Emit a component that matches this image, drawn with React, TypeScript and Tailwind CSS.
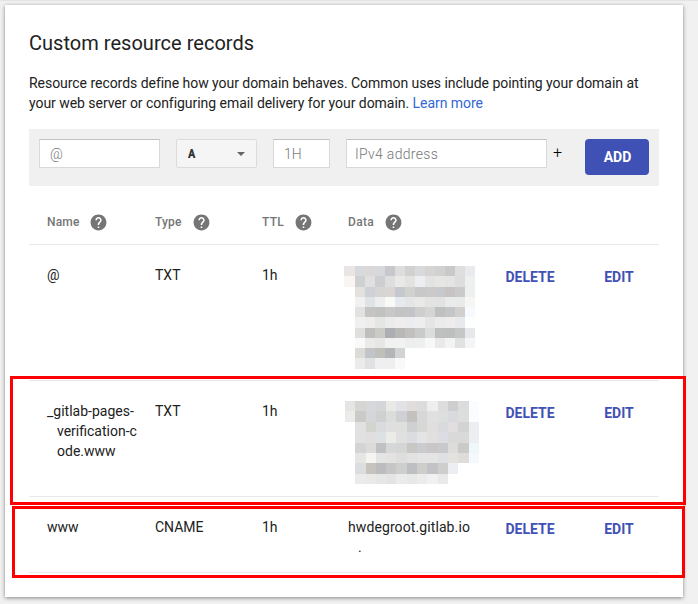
import React from "react";

const firstMosaic: string[][] = [
  ["e9e5e4", "d7d9dc", "dbd9d7", "d6d8db", "c6c8cb", "dddddd", "d1d1cf", "d7d9dc", "d5d4d2", "d2d1cf", "c7c9cb", "dedede", "e8eaed"],
  ["fbf5f1", "cfd0d2", "e0e0e0", "cdcecf", "dedede", "eae9e7", "e2e2df", "eceef2", "e3e3e1", "e6e6e4", "e4e4e4", "dddddd", "edf0ef"],
  ["ffffff", "e2e1db", "ced2d8", "d7d5d3", "d9d5d2", "c5c9ce", "d1d1cf", "c8c8c8", "cbcaca", "c8c9cc", "c6c3c2", "cacaca", "edf0ef"],
  ["ffffff", "f1f1f1", "e0e3e6", "ecefee", "f9f9f8", "e6e9ed", "e5e5e6", "ebe9e7", "e3e3e4", "e2e2e3", "e8ebea", "e7eae8", "f6f6f3"],
  ["ffffff", "e2e2e1", "c5c4c3", "c1c2c2", "c9c8c8", "c3c3c3", "c2c4c7", "cececd", "d6d5d6", "bfc1c1", "c3c5c7", "d1d0cf", "f6faff"],
  ["ffffff", "f0f0f0", "eeedec", "e4e6e4", "ebebec", "efeded", "ebecf0", "efeeee", "e5e5e6", "ebebeb", "efedec", "e8e9ec", "fdfefe"],
  ["ffffff", "dfdfde", "bdbebe", "cacbc4", "adaeb2", "b8b8b7", "c2c0be", "c8cbca", "dadddb", "bebfbf", "bebebe", "c5c7c6", "e6e8eb"],
  ["ffffff", "f9f9f9", "ebebea", "e6e7e4", "f1f1f2", "f2f2f2", "ecefee", "eef0ef", "f7f7f7", "e9e9e9", "f4f3f3", "dfe2e1", "f4f5f7"],
  ["ffffff", "dcdbd7", "c1c5ca", "bfc0ba", "b4b5b9", "d2d4d3"],
  ["ffffff", "ebebeb", "dfe1e2", "efefef", "efefef", "f7faf9"],
];

const secondMosaic: string[][] = [
  ["e5e5e3", "d6d5d3", "d5d9dc", "d3d5d8", "e9e9e6", "e0e2e6", "e0dddc", "dadddb", "eeeeed", "dddddd", "cecece", "dadddb", "fafcff"],
  ["ebebe9", "cacac8", "d4d6da", "d0d0d1", "dadddb", "ced0d4", "c4c1bf", "d7d7d7", "e0e0e0", "dcdfde", "d8dadd", "dddddb", "fafcff"],
  ["ffffff", "e1e1e1", "d3d4cd", "dadbde", "dfdfdf", "dfdfdc", "cfd0d2", "d7d7d6", "e0dedf", "d8dade", "e2dee0", "d3d3d3", "eceef1"],
  ["ffffff", "e1e1e2", "e0dfdd", "dce1e3", "ebebe8", "e0e0de", "dadce0", "e3e4e4", "e2e0df", "dcdde3", "d9d9d9", "d9d9d9", "eceef1"],
  ["ffffff", "d4d4d5", "dcdbda", "bfc1c3", "d6d8d7", "d4d6d5", "c9c7c6", "c9cbce", "cac7c6", "c7c9cc", "dedcda", "cacac9", "f0f7fa"],
  ["ffffff", "e6e6e4", "f4f4f1", "e3e5e4", "e4e3e2", "dedede", "e4e2e1", "e4e4e4", "e4e4e4", "dee0e3", "e4e1df", "dfddda", "f5f9fc"],
  ["ffffff", "dcddde", "c6c2be", "bbbcbd", "c6c6c6", "cececc", "bdbfc2", "cdcdcb", "c1c3c6", "cececc", "ededf4"],
  ["ffffff", "ebebeb", "e9e9e8", "e6e8e7", "e3e4e3", "ebebec", "e7e9e8", "ececea", "f0f2f1", "e9e9e9"],
];

function Mosaic({ rows, cell }: { rows: string[][]; cell: string }) {
  return (
    <div>
      {rows.map((row, y) => (
        <div key={y} className="flex">
          {row.map((color, x) => (
            <div key={x} className={cell} style={{ backgroundColor: `#${color}` }} />
          ))}
        </div>
      ))}
    </div>
  );
}

function HelpIcon() {
  return (
    <svg viewBox="0 0 24 24" className="h-[19px] w-[19px] shrink-0" fill="#757575">
      <path d="M12 2C6.48 2 2 6.48 2 12s4.48 10 10 10 10-4.48 10-10S17.52 2 12 2zm1 17h-2v-2h2v2zm2.07-7.75l-.9.92C13.45 12.9 13 13.5 13 15h-2v-.5c0-1.1.45-2.1 1.17-2.83l1.24-1.26c.37-.36.59-.86.59-1.41 0-1.1-.9-2-2-2s-2 .9-2 2H8c0-2.21 1.79-4 4-4s4 1.79 4 4c0 .88-.36 1.68-.93 2.25z" />
    </svg>
  );
}

function HeaderCell({ label, className }: { label: string; className: string }) {
  return (
    <div className={`flex items-center ${className}`}>
      <span className="mr-[10px]">{label}</span>
      <HelpIcon />
    </div>
  );
}

const inputClass =
  "h-[29px] shrink-0 border border-[#d9d9d9] border-t-[#c0c0c0] bg-white text-[14px] font-light text-[#222] outline-none placeholder:text-[#777] placeholder:opacity-100";

function RecordRow({
  name,
  type,
  className,
  children,
}: {
  name: React.ReactNode;
  type: string;
  className: string;
  children: React.ReactNode;
}) {
  return (
    <div className={`flex border-b border-[#e9e9e9] pl-[18px] ${className}`}>
      <div className="w-[108px] pt-5 pl-[10px] -indent-[10px]">{name}</div>
      <div className="w-[107px] pt-5">{type}</div>
      <div className="w-[86px] pt-5">1h</div>
      <div className="w-[141px] shrink-0">{children}</div>
      <div className="flex gap-4 pt-[14px] text-[14px] font-bold text-[#3f51b5]">
        <button className="h-9 w-[82px] rounded-[3px]">DELETE</button>
        <button className="h-9 w-16 rounded-[3px]">EDIT</button>
      </div>
    </div>
  );
}

export default function App() {
  return (
    <div className="relative h-[604px] w-[698px] overflow-hidden border-t border-[#e3e3e3] bg-[#f1f1f1] pt-1 pl-[5px] font-['Roboto',sans-serif] text-[14px] leading-5 text-[#212121]">
      <main className="h-[592px] w-[678px] bg-white px-6 pt-6 shadow-[0_1px_4px_rgba(0,0,0,0.45)]">
        <h1 className="text-[20px] leading-7 font-normal tracking-[0.03px]">Custom resource records</h1>
        <p className="mt-4 w-[630px] tracking-[-0.043px] whitespace-nowrap">
          Resource records define how your domain behaves. Common uses include pointing your domain at
          <br />
          your web server or configuring email delivery for your domain.{" "}
          <a className="text-[#3367d6]">Learn more</a>
        </p>

        <div className="mt-4 flex h-[57px] w-[630px] items-start bg-[#f0f0f0] pt-[10px] pl-[10px]">
          <input className={`${inputClass} w-[121px] pt-px pr-2 pl-[10px]`} placeholder="@" />
          <button className="ml-4 flex h-[29px] w-[81px] shrink-0 items-center justify-between rounded-[2px] border border-[#dcdcdc] bg-[#f5f5f5] pt-px pr-[11px] pl-[11px] text-[12px] font-black text-[#333]">
            <span className="origin-left scale-x-90">A</span>
            <span className="h-0 w-0 border-x-4 border-t-4 border-x-transparent border-t-[#666]" />
          </button>
          <input className={`${inputClass} ml-4 w-[57px] pt-px pr-1 pl-[10px]`} placeholder="1H" />
          <input
            className={`${inputClass} ml-4 w-[201px] pt-px pr-2 pl-[8px] tracking-[0.3px]`}
            placeholder="IPv4 address"
          />
          <span className="ml-[6px] w-[32px] pt-[4px] text-[16px] font-light text-black">+</span>
          <button className="h-9 w-16 rounded-[4px] bg-[#3f51b5] pl-px font-bold text-white">ADD</button>
        </div>

        <div className="flex h-[59px] w-[630px] border-b border-[#e9e9e9] pt-[14px] pl-[18px] text-[12px] font-medium text-[#757575]">
          <HeaderCell label="Name" className="w-[108px] tracking-[0.15px]" />
          <HeaderCell label="Type" className="w-[107px] tracking-[0.15px]" />
          <HeaderCell label="TTL" className="w-[86px] tracking-[0.3px]" />
          <HeaderCell label="Data" className="w-[100px] tracking-[0.3px]" />
        </div>

        <div className="w-[630px]">
          <RecordRow name="@" type="TXT" className="h-[136px]">
            <div className="-ml-1 pt-[21px]">
              <Mosaic rows={firstMosaic} cell="h-[10.27px] w-[10px] shrink-0 first:w-[11px]" />
            </div>
          </RecordRow>
          <RecordRow
            name={
              <>
                _gitlab-pages-
                <br />
                <span className="block indent-0">
                  verification-c
                  <br />
                  ode.www
                </span>
              </>
            }
            type="TXT"
            className="h-[116px]"
          >
            <div className="-ml-[3px] pt-5">
              <Mosaic rows={secondMosaic} cell="h-[10.375px] w-[10.31px] shrink-0" />
            </div>
          </RecordRow>
          <RecordRow name="www" type="CNAME" className="h-[76px]">
            <div className="pt-5 pl-[10px] -indent-[10px] tracking-[0.1px]">
              hwdegroot.gitlab.io
              <span className="block indent-0">.</span>
            </div>
          </RecordRow>
        </div>
      </main>

      {/* Highlight frames around the GitLab records */}
      <div className="pointer-events-none absolute top-[375px] left-[10px] h-[129px] w-[676px] border-3 border-[#ff0000]" />
      <div className="pointer-events-none absolute top-[505px] left-[12px] h-[72px] w-[673px] border-3 border-[#ff0000]" />
    </div>
  );
}
